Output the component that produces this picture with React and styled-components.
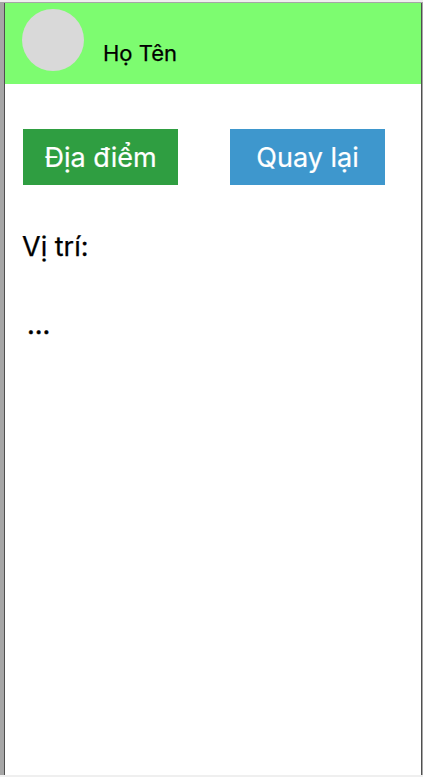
import React from "react";
import styled, { createGlobalStyle } from "styled-components";

const GlobalStyle = createGlobalStyle`
  * { box-sizing: border-box; }
  body {
    margin: 0;
    background: #fff;
    color: #000;
    font-family: Inter, "Noto Sans", sans-serif;
    -webkit-text-stroke: 0.25px currentColor;
  }
`;

const Page = styled.div`
  width: 423px;
  height: 777px;
  display: flex;
  flex-direction: column;
  border-top: 2px solid #efefef;
  border-bottom: 2px solid #efefef;
`;

const Canvas = styled.div`
  flex: 1;
  display: flex;
  padding: 1px 1px 0 4px;
  background: #a6a6a6;
`;

const Screen = styled.main`
  flex: 1;
  background: #fff;
  border: solid #4f4f4f;
  border-width: 0 1px;
`;

const Header = styled.header`
  height: 81px;
  display: flex;
  align-items: flex-start;
  padding: 6px 17px;
  gap: 19px;
  background: #7dfc70;
`;

const Avatar = styled.div`
  width: 62px;
  height: 62px;
  border-radius: 50%;
  background: #d9d9d9;
`;

const Name = styled.span`
  margin-top: 31px;
  font-size: 22px;
  line-height: 27px;
`;

const Actions = styled.div`
  display: flex;
  gap: 52px;
  padding: 45px 18px 0;
`;

const Button = styled.button`
  width: 155px;
  height: 56px;
  padding: 0;
  border: 0;
  font: 27px/33px Inter, "Noto Sans", sans-serif;
  color: #fff;
  -webkit-text-stroke: 0.2px #fff;
  background: ${(p) => p.$color};
`;

const Label = styled.h2`
  margin: 45px 17px 0;
  font-size: 27px;
  font-weight: 400;
  line-height: 33px;
`;

const Value = styled.p`
  margin: 45px 22px 0;
  font-size: 27px;
  line-height: 33px;
  -webkit-text-stroke-width: 0.5px;
`;

export default function App() {
  return (
    <>
      <GlobalStyle />
      <Page>
        <Canvas>
          <Screen>
            <Header>
              <Avatar />
              <Name>Họ Tên</Name>
            </Header>
            <Actions>
              <Button $color="#2f9e41">Địa điểm</Button>
              <Button $color="#3e97cd">Quay lại</Button>
            </Actions>
            <Label>Vị trí:</Label>
            <Value>...</Value>
          </Screen>
        </Canvas>
      </Page>
    </>
  );
}
